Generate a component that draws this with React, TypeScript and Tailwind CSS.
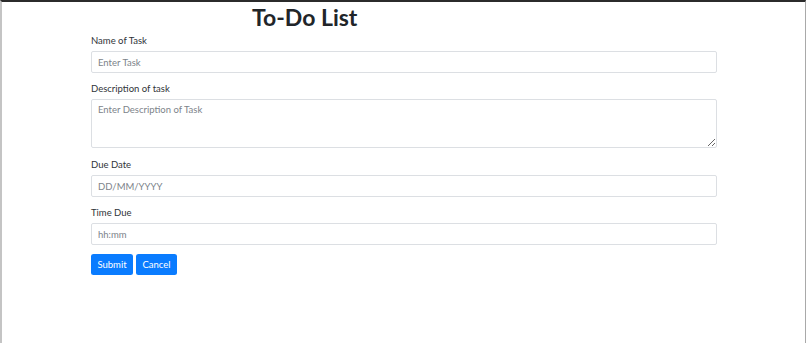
import React from "react";

export default function App() {
  const font = { fontFamily: 'Lato, "Noto Sans", Arial, sans-serif' };
  const inputCls =
    "block w-full h-[22px] border border-[#dcdfe3] rounded-[2px] px-[6px] text-[9.5px] text-[#212529] placeholder:text-[#7d838a] outline-none bg-white";
  const labelCls = "block h-[15px] leading-[15px] text-[9.5px] text-[#2f3338] mb-[3px]";
  return (
    <div
      className="w-[806px] h-[343px] bg-white border-t-2 border-t-[#2b2b2b] border-l-2 border-l-[#c4c4c4] border-r border-r-[#a9a9a9] overflow-hidden"
      style={font}
    >
      <div className="pl-[89px] w-[717px]">
        <h1 className="ml-[161px] h-[31px] leading-[31px] text-[23px] font-bold text-[#212529]">
          To-Do List
        </h1>
        <form className="w-[626px]">
          <label className={labelCls}>Name of Task</label>
          <input className={inputCls} placeholder="Enter Task" />
          <label className={labelCls + " mt-[8px]"}>Description of task</label>
          <textarea
            className="block w-full h-[49px] border border-[#dcdfe3] rounded-[2px] px-[6px] py-[3px] text-[9.5px] leading-[14px] text-[#212529] placeholder:text-[#7d838a] outline-none bg-white resize-y"
            placeholder="Enter Description of Task"
          />
          <label className={labelCls + " mt-[9px]"}>Due Date</label>
          <input className={inputCls} placeholder="DD/MM/YYYY" />
          <label className={labelCls + " mt-[8px]"}>Time Due</label>
          <input className={inputCls} placeholder="hh:mm" />
          <div className="flex gap-[3px] mt-[9px]">
            <button
              type="button"
              className="h-[21px] w-[42px] rounded-[2.5px] bg-[#0a7cff] text-white text-[9.5px] leading-[21px]"
            >
              Submit
            </button>
            <button
              type="button"
              className="h-[21px] w-[41px] rounded-[2.5px] bg-[#0a7cff] text-white text-[9.5px] leading-[21px]"
            >
              Cancel
            </button>
          </div>
        </form>
      </div>
    </div>
  );
}
